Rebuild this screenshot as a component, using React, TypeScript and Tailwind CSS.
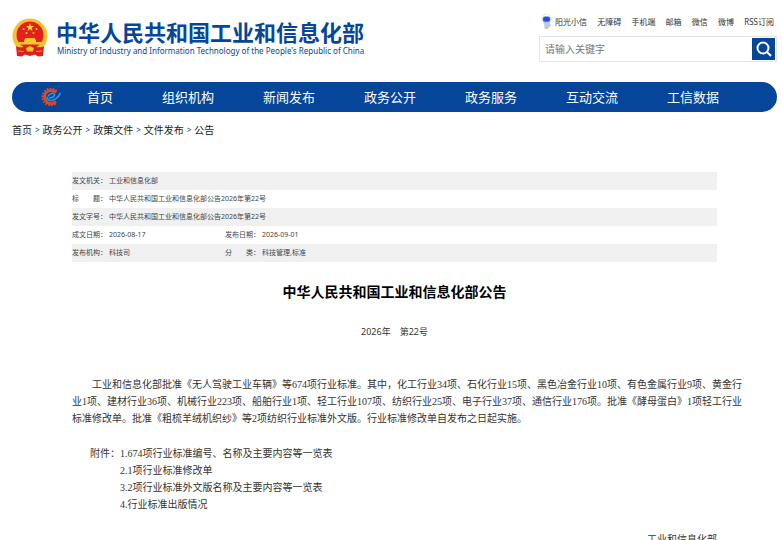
import React from "react";

const TOP_LINKS = ["无障碍", "手机端", "邮箱", "微信", "微博", "RSS订阅"];

const NAV_ITEMS = ["首页", "组织机构", "新闻发布", "政务公开", "政务服务", "互动交流", "工信数据"];

const CRUMBS = ["首页", "政务公开", "政策文件", "文件发布", "公告"];

const ATTACHMENTS = [
  "674项行业标准编号、名称及主要内容等一览表",
  "1项行业标准修改单",
  "2项行业标准外文版名称及主要内容等一览表",
  "行业标准出版情况",
];

const Emblem: React.FC = () => (
  <svg viewBox="0 0 36 39" className="h-[39px] w-9 shrink-0" aria-hidden="true">
    <circle cx="18" cy="18" r="17.5" fill="#f3c230" />
    <circle cx="18" cy="17" r="13.5" fill="#e3201b" />
    <path d="M18 5 L19 8 L22 8 L19.7 10 L20.5 13 L18 11.2 L15.5 13 L16.3 10 L14 8 L17 8 Z" fill="#f9d53c" />
    <circle cx="11.5" cy="11" r="1" fill="#f9d53c" />
    <circle cx="24.5" cy="11" r="1" fill="#f9d53c" />
    <circle cx="14.5" cy="15" r="1" fill="#f9d53c" />
    <circle cx="21.5" cy="15" r="1" fill="#f9d53c" />
    <path d="M13.500 20 H22.500 L24 22.500 V24 H29 V26.500 H7 V24 H12 V22.500 Z" fill="#f5c733" />
    <path d="M4 28 C8 31 12 28 18 29 C24 28 28 31 32 28 L31 38 L26 38.500 L23 36.500 L18 38 L13 36.500 L10 38.500 L5 38 Z" fill="#dc1f1b" />
    <path d="M14 30 L18 28 L22 30 L21 33.500 H15 Z" fill="#f3c230" />
    <path d="M6 33 L12 33.500 M30 33 L24 33.500" stroke="#f3c230" strokeWidth="0.8" />
  </svg>
);

const Mascot: React.FC = () => (
  <svg viewBox="0 0 11 16" className="h-4 w-[11px]" aria-hidden="true">
    <circle cx="5.500" cy="5" r="4.800" fill="none" stroke="#f5cf5a" strokeWidth="1" strokeDasharray="1 1.500" />
    <path d="M3 8 H8.500 L10 11 L8 14 H3.500 Z" fill="#b9cdf0" />
    <rect x="1.500" y="2" width="8" height="6.500" rx="3" fill="#8fb0ec" />
    <rect x="2" y="3" width="7" height="4.500" rx="2" fill="#2b50cf" />
    <path d="M4 14.500 H7" stroke="#e8c65c" />
  </svg>
);

const GearLogo: React.FC = () => (
  <svg viewBox="0 0 20 20" className="h-5 w-5" aria-hidden="true">
    <path d="M15.500 4.500 A8 8 0 1 0 15.500 15.500" fill="none" stroke="#e2491f" strokeWidth="2.600" strokeDasharray="1.700 1.200" />
    <path d="M15 5.500 A6.600 6.600 0 1 0 15 14.500" fill="none" stroke="#e2491f" strokeWidth="2.600" />
    <path d="M6 10.500 C6.500 14 10.500 14.500 13.500 12.500 C16.500 10.500 18.500 9 19 6.500" fill="none" stroke="#2f8bd8" strokeWidth="1.800" strokeLinecap="round" />
    <path d="M8 11 C11 11 14 9.500 13.500 7.500 C12.500 5.300 8.500 6 7 9.500" fill="none" stroke="#3d93dc" strokeWidth="1.500" />
  </svg>
);

const Header: React.FC = () => (
  <header className="flex items-start justify-between pt-[14px] pr-[5px] pl-3">
    <a href="#" className="mt-1 flex gap-2 text-[#05469a]">
      <Emblem />
      <span className="flex flex-col whitespace-nowrap">
        <span className="text-[22px] leading-7 font-bold">中华人民共和国工业和信息化部</span>
        <span className="pl-px text-[8px] leading-[10px]">
          Ministry of Industry and Information Technology of the People's Republic of China
        </span>
      </span>
    </a>
    <div className="w-[238px]">
      <ul className="flex h-4 items-center justify-between pr-[3px] pl-0.5 text-[8px] whitespace-nowrap text-[#333]">
        <li>
          <a href="#" className="flex items-center gap-[3px]">
            <Mascot />
            阳光小信
          </a>
        </li>
        {TOP_LINKS.map((link) => (
          <li key={link}>
            <a href="#">{link}</a>
          </li>
        ))}
      </ul>
      <form className="mt-[6px] flex h-[26px] border border-[#e3e5e8] p-px" onSubmit={(e) => e.preventDefault()}>
        <input
          type="text"
          aria-label="搜索"
          placeholder="请输入关键字"
          className="min-w-0 flex-1 pl-1 text-[10px] outline-none placeholder:text-[#777]"
        />
        <button type="submit" aria-label="搜索" className="flex w-[23px] items-center justify-center bg-[#05469a]">
          <svg viewBox="0 0 16 16" className="h-4 w-4" fill="none" stroke="#fff" strokeWidth="2" aria-hidden="true">
            <circle cx="7" cy="7" r="5.500" />
            <path d="M11 11 L15 15" />
          </svg>
        </button>
      </form>
    </div>
  </header>
);

const NavBar: React.FC = () => (
  <nav className="mt-5 mr-[5px] ml-3 flex h-[30px] items-center rounded-full bg-[#05469a] pl-[29px] text-[13px] text-white">
    <GearLogo />
    <ul className="ml-[26px] flex gap-[49px] pt-px whitespace-nowrap">
      {NAV_ITEMS.map((item) => (
        <li key={item}>
          <a href="#">{item}</a>
        </li>
      ))}
    </ul>
  </nav>
);

const Breadcrumb: React.FC = () => (
  <ol className="mt-[10px] flex gap-[3px] pl-3 text-[10px] leading-4 text-[#222]">
    {CRUMBS.map((crumb, index) => (
      <li key={crumb} className="flex gap-[3px]">
        {index > 0 && <span className="text-[8px] text-[#05469a]">&gt;</span>}
        <a href="#">{crumb}</a>
      </li>
    ))}
  </ol>
);

const DocumentInfo: React.FC = () => (
  <table className="w-full table-fixed text-left text-[7px] leading-[18px] text-[#444]">
    <colgroup>
      <col className="w-[37px]" />
      <col className="w-[116px]" />
      <col className="w-[37px]" />
      <col />
    </colgroup>
    <tbody className="[&_th]:font-normal [&_th]:whitespace-nowrap [&_tr:nth-child(odd)]:bg-[#f0f0f0]">
      <tr>
        <th scope="row">发文机关：</th>
        <td colSpan={3}>工业和信息化部</td>
      </tr>
      <tr>
        <th scope="row">标　　题：</th>
        <td colSpan={3}>中华人民共和国工业和信息化部公告2026年第22号</td>
      </tr>
      <tr>
        <th scope="row">发文字号：</th>
        <td colSpan={3}>中华人民共和国工业和信息化部公告2026年第22号</td>
      </tr>
      <tr>
        <th scope="row">成文日期：</th>
        <td>2026-08-17</td>
        <th scope="row">发布日期：</th>
        <td>2026-09-01</td>
      </tr>
      <tr>
        <th scope="row">发布机构：</th>
        <td>科技司</td>
        <th scope="row">分　　类：</th>
        <td>科技管理,标准</td>
      </tr>
    </tbody>
  </table>
);

const App: React.FC = () => {
  return (
    <div className="h-screen overflow-hidden bg-white font-['Noto_Sans','Noto_Sans_CJK_SC',sans-serif]">
      <Header />
      <NavBar />
      <Breadcrumb />

      <main className="mt-[34px] mr-[65px] ml-[72px]">
        <DocumentInfo />
        <h1 className="mt-5 text-center text-sm leading-5 font-bold text-black">中华人民共和国工业和信息化部公告</h1>
        <p className="mt-5 text-center text-[9px] leading-5 text-[#333]">2026年　第22号</p>

        <div className="mt-[34px] font-['Liberation_Serif','Noto_Sans_CJK_SC',serif] text-[10px] leading-[17px] text-[#333]">
          <p className="indent-5 whitespace-nowrap">
            工业和信息化部批准《无人驾驶工业车辆》等674项行业标准。其中，化工行业34项、石化行业15项、黑色冶金行业10项、有色金属行业9项、黄金行
            <br />
            业1项、建材行业36项、机械行业223项、船舶行业1项、轻工行业107项、纺织行业25项、电子行业37项、通信行业176项。批准《酵母蛋白》1项轻工行业
            <br />
            标准修改单。批准《粗梳羊绒机织纱》等2项纺织行业标准外文版。行业标准修改单自发布之日起实施。
          </p>
          <div className="mt-[18px] flex pl-[18px]">
            <span>附件：</span>
            <ol>
              {ATTACHMENTS.map((name, index) => (
                <li key={name}>
                  <a href="#">
                    {index + 1}.{name}
                  </a>
                </li>
              ))}
            </ol>
          </div>
          <p className="mt-[18px] text-right">工业和信息化部</p>
        </div>
      </main>
    </div>
  );
};

export default App;
